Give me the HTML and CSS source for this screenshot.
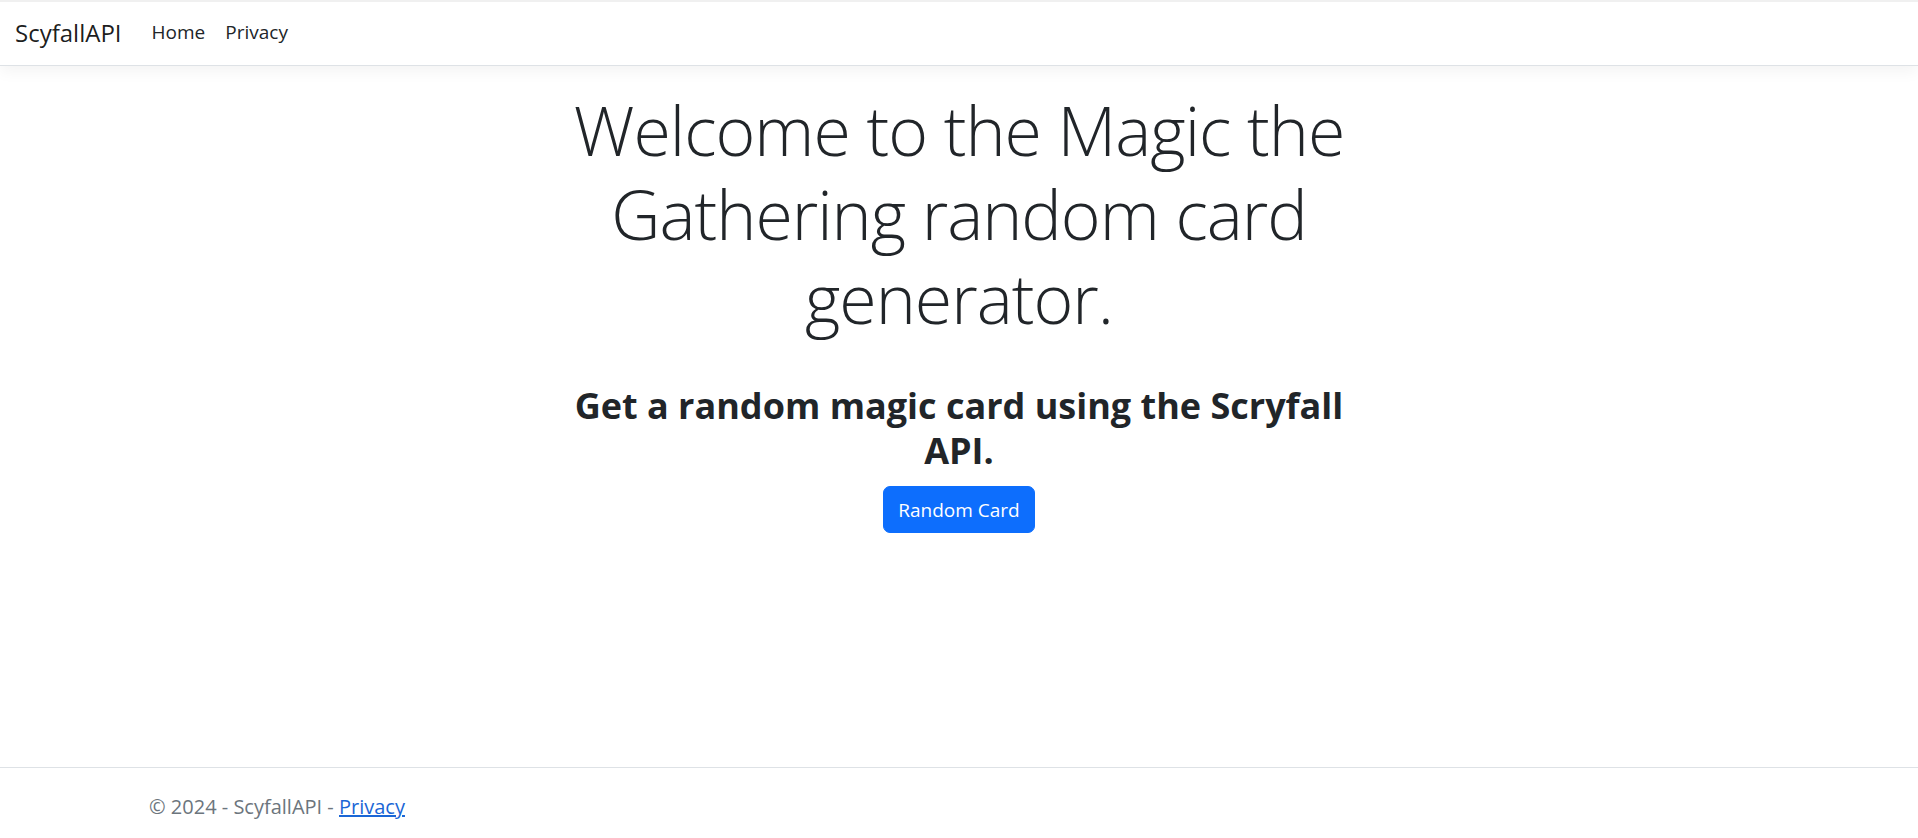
FILE: index.html
```html
<!DOCTYPE html>
<html lang="en">
<head>
<meta charset="utf-8">
<title>Home Page - ScyfallAPI</title>
<link rel="stylesheet" href="styles.css">
</head>
<body>
<div class="page">
  <header class="navbar">
    <div class="navbar-inner">
      <a class="brand" href="#">ScyfallAPI</a>
      <ul class="nav">
        <li><a class="nav-link" href="#">Home</a></li>
        <li><a class="nav-link" href="#">Privacy</a></li>
      </ul>
    </div>
  </header>
  <main class="main">
    <div class="column">
      <h1 class="display">Welcome to the Magic the Gathering random card generator.</h1>
      <h3 class="subtitle">Get a random magic card using the Scryfall API.</h3>
      <button class="btn" type="button">Random Card</button>
    </div>
  </main>
  <footer class="footer">
    <div class="footer-inner">&copy; 2024 - ScyfallAPI - <a href="#">Privacy</a></div>
  </footer>
</div>
</body>
</html>
```
FILE: styles.css
```css
* { box-sizing: border-box; }
html, body { margin: 0; padding: 0; }
body {
  font-family: "Open Sans", "Noto Sans", sans-serif;
  color: #212529;
  background: #fff;
}
.page {
  min-height: 100vh;
  display: flex;
  flex-direction: column;
}
.navbar {
  border-top: 2px solid #f0f0f0;
  border-bottom: 1px solid #dee2e6;
  box-shadow: 0 5px 15px rgba(0,0,0,.05);
  height: 66px;
  background: #fff;
}
.navbar-inner {
  display: flex;
  align-items: center;
  height: 100%;
  padding: 0 15px 2px;
}
.brand {
  font-size: 24px;
  color: rgba(0,0,0,.9);
  text-decoration: none;
  margin-right: 20px;
}
.nav {
  display: flex;
  list-style: none;
  margin: 0;
  padding: 0;
}
.nav-link {
  display: block;
  font-size: 19px;
  color: #212529;
  text-decoration: none;
  padding: 8px 10px 10px;
}
.main {
  flex: 1;
  padding-top: 22px;
}
.column {
  width: 795px;
  margin: 0 auto;
  text-align: center;
  display: flex;
  flex-direction: column;
  align-items: center;
}
.display {
  font-size: 68px;
  font-weight: 300;
  letter-spacing: -1px;
  line-height: 84px;
  margin: 0 0 43px;
}
.subtitle {
  font-size: 36px;
  font-weight: 700;
  line-height: 45px;
  margin: 0 0 13px;
}
.btn {
  font-family: inherit;
  font-size: 19px;
  color: #fff;
  background: #0d6efd;
  border: 1px solid #0d6efd;
  border-radius: 7px;
  width: 152px;
  height: 47px;
  padding: 0;
}
.footer {
  border-top: 1px solid #dee2e6;
  height: 71px;
  color: #6c757d;
  font-size: 20px;
}
.footer-inner {
  width: 1650px;
  margin: 0 auto;
  padding: 0 15px;
  line-height: 78px;
}
.footer a { color: #1a66d6; }
```
